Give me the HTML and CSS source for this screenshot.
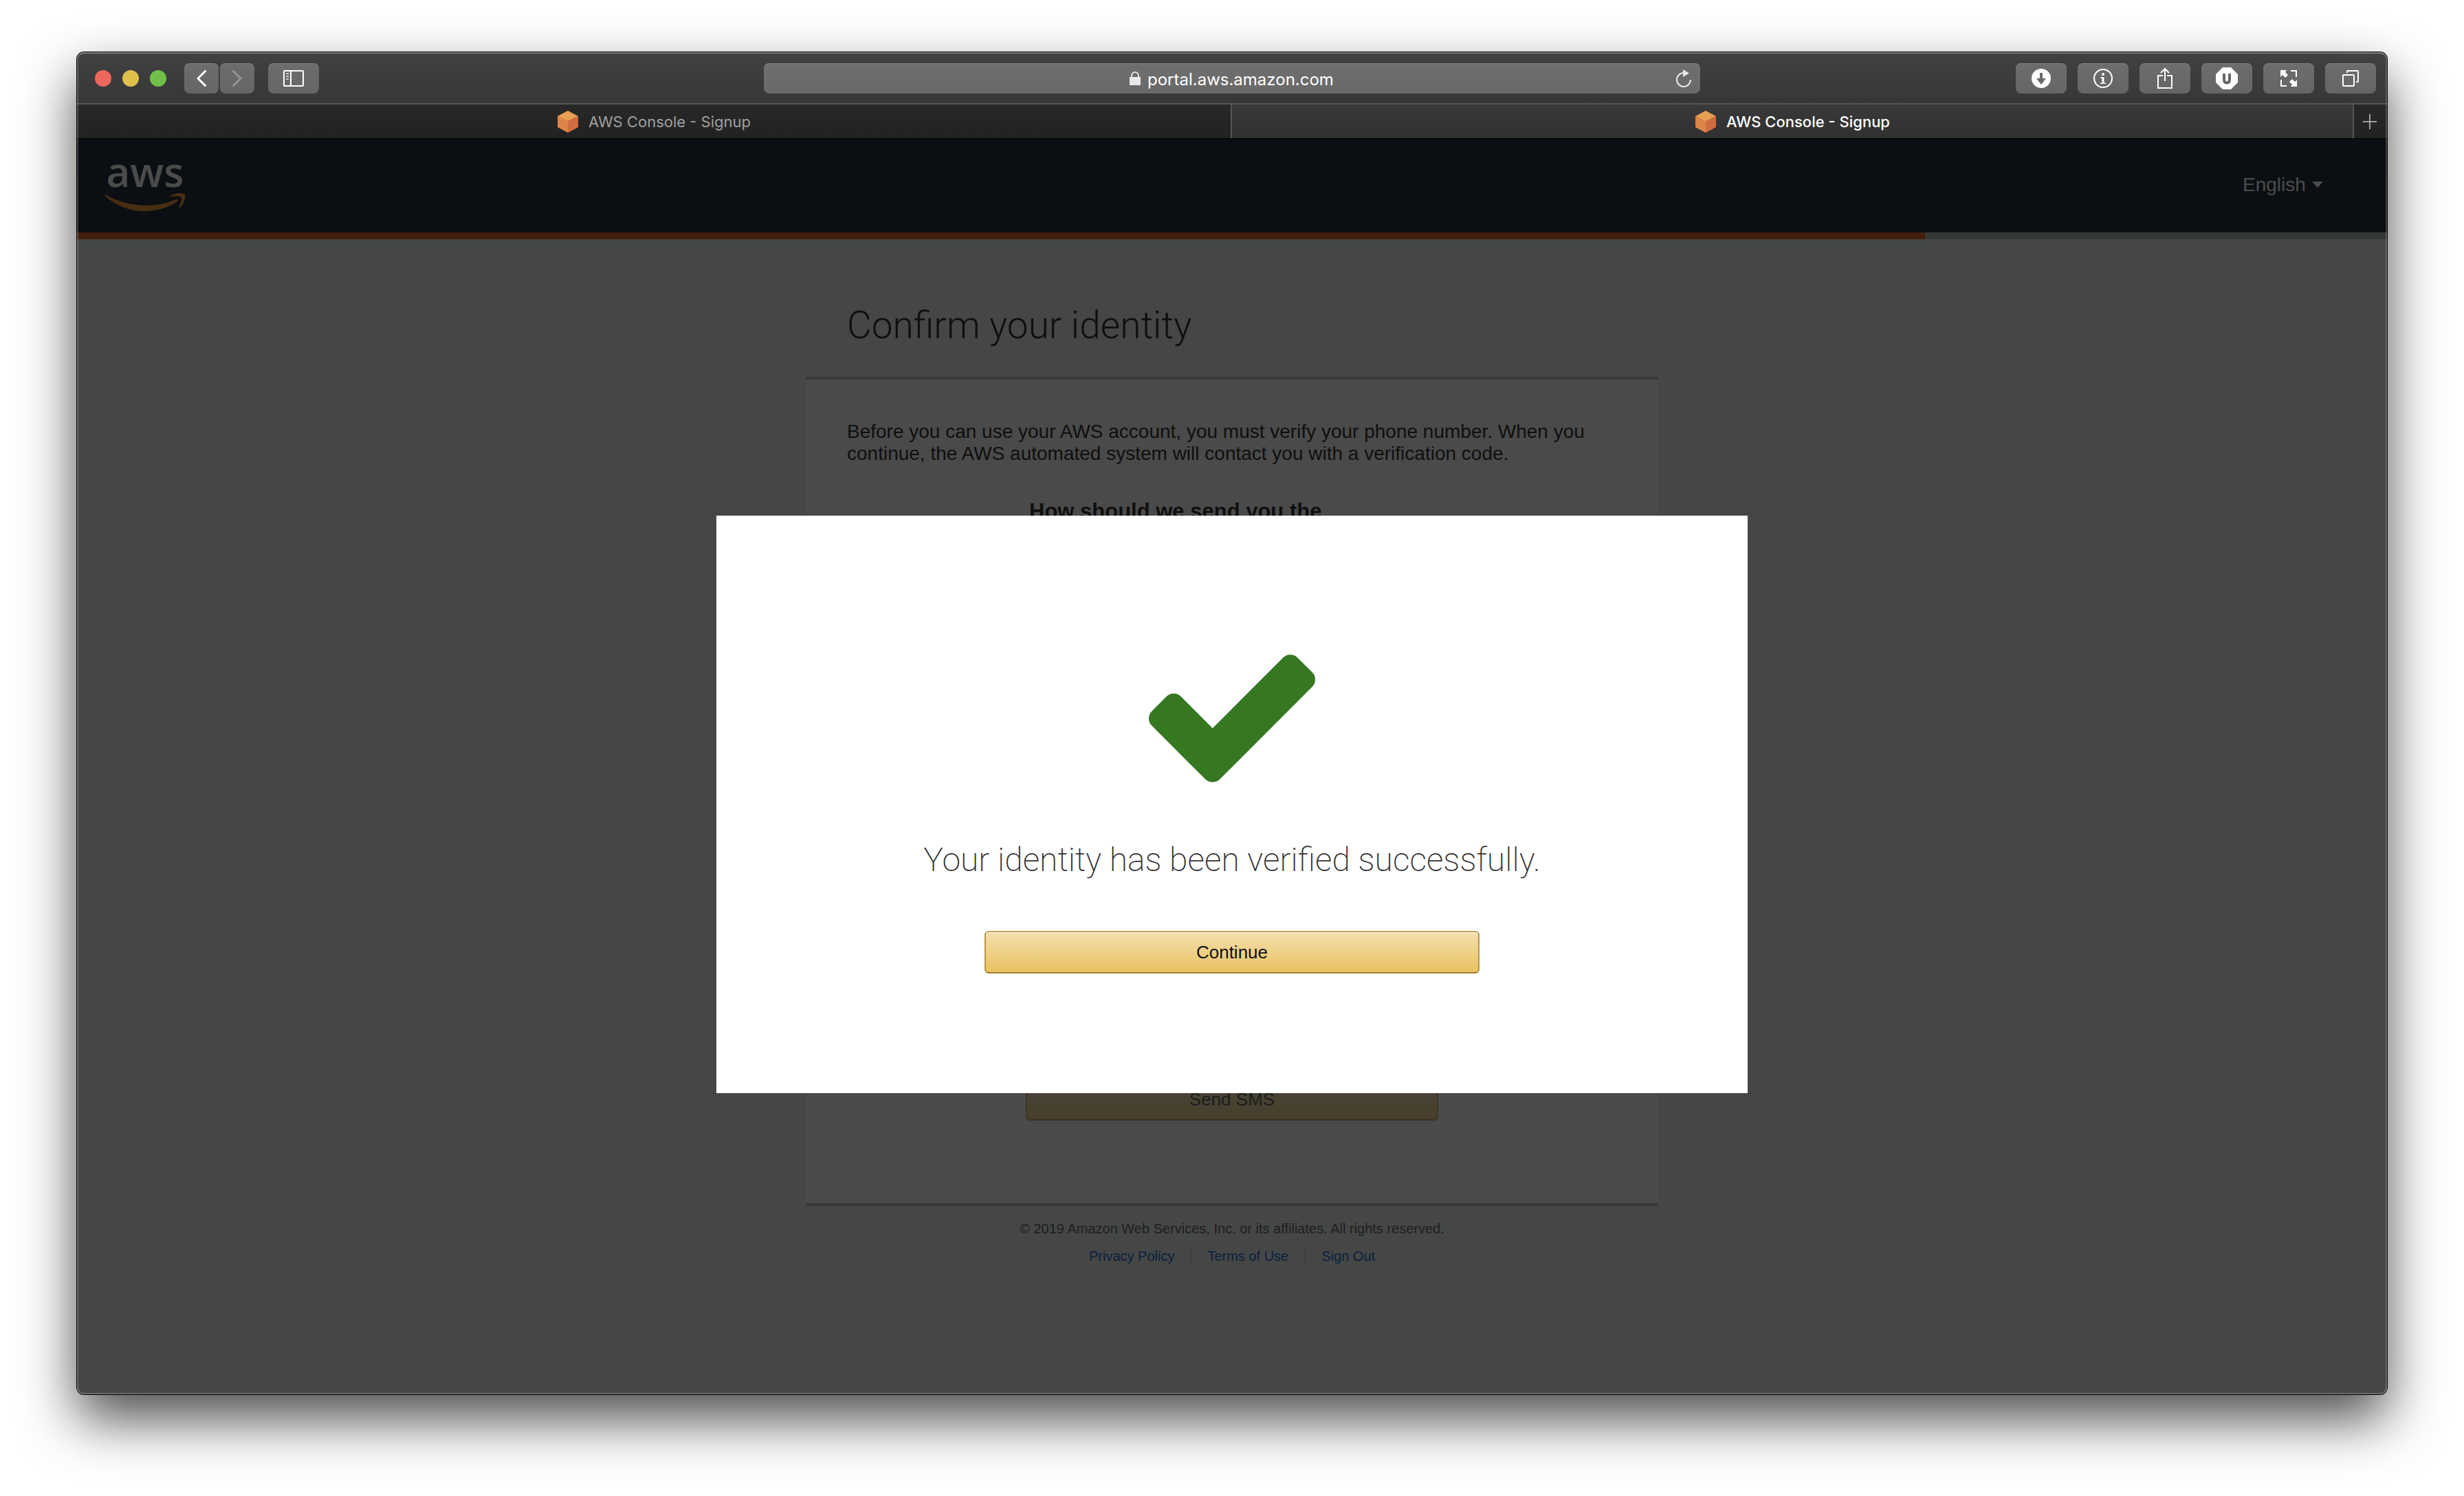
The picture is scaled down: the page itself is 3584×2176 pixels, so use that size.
FILE: index.html
```html
<!DOCTYPE html>
<html lang="en">
<head>
<meta charset="utf-8">
<title>AWS Console - Signup</title>
<link rel="stylesheet" href="styles.css">
</head>
<body>
<div class="window">
  <div class="toolbar">
    <div class="toolbar-side">
      <div class="lights">
        <span class="light light-close"></span>
        <span class="light light-min"></span>
        <span class="light light-max"></span>
      </div>
      <div class="nav">
        <button class="tool tool-nav" aria-label="Back"><svg width="14" height="24" viewBox="0 0 14 24"><path d="M12.500 1.500L2 12l10.500 10.500" fill="none" stroke="#fff" stroke-width="3" stroke-linecap="round" stroke-linejoin="round"/></svg></button>
        <button class="tool tool-nav" aria-label="Forward"><svg width="14" height="24" viewBox="0 0 14 24"><path d="M1.500 1.500L12 12 1.500 22.500" fill="none" stroke="#959595" stroke-width="3" stroke-linecap="round" stroke-linejoin="round"/></svg></button>
      </div>
      <button class="tool" aria-label="Sidebar"><svg width="30" height="24" viewBox="0 0 30 24"><rect x="1" y="1" width="28" height="22" rx="1" fill="none" stroke="#fff" stroke-width="2"/><path d="M11 1v22" stroke="#fff" stroke-width="2"/><path d="M4 5h4M4 9h4M4 13h4" stroke="#ccc" stroke-width="2"/></svg></button>
    </div>
    <div class="address">
      <svg class="lock" width="16" height="20" viewBox="0 0 16 20"><path d="M0 8h16v12H0z" fill="#e8e8e8"/><path d="M3 9V6a5 5 0 0 1 10 0v3" fill="none" stroke="#e8e8e8" stroke-width="2"/></svg>
      <input class="address-input" type="text" aria-label="Address" value="portal.aws.amazon.com">
      <button class="reload" aria-label="Reload"><svg width="22" height="26" viewBox="0 0 22 26"><path d="M11 5a10 10 0 1 0 10 10" fill="none" stroke="#e8e8e8" stroke-width="2"/><path d="M10 0l9 5.500-9 5.500z" fill="#e8e8e8"/></svg></button>
    </div>
    <div class="toolbar-side toolbar-right">
      <button class="tool" aria-label="Downloads"><svg width="28" height="28" viewBox="0 0 28 28"><circle cx="14" cy="14" r="14" fill="#fff"/><path d="M12 6h4v8h5l-7 9-7-9h5z" fill="#676767"/></svg></button>
      <button class="tool" aria-label="Info"><svg width="28" height="28" viewBox="0 0 28 28"><circle cx="14" cy="14" r="13" fill="none" stroke="#fff" stroke-width="2"/><circle cx="14" cy="8" r="2" fill="#fff"/><path d="M10.500 12h5v8.500H18V22h-8v-1.500h2.500V14h-2z" fill="#fff"/></svg></button>
      <button class="tool" aria-label="Share"><svg width="24" height="32" viewBox="0 0 24 32"><path d="M9 12H2v18h20V12h-7M12 20V3M6 8l6-6 6 6" fill="none" stroke="#fff" stroke-width="2"/></svg></button>
      <button class="tool" aria-label="Blocker"><svg width="32" height="32" viewBox="0 0 32 32"><path d="M10 0h12l10 10v12L22 32H10L0 22V10z" fill="#fff"/><path d="M12 9v8.500q0 5 4 5t4-5V9" fill="none" stroke="#676767" stroke-width="4"/></svg></button>
      <button class="tool" aria-label="Full screen"><svg width="24" height="24" viewBox="0 0 24 24"><path d="M15 1h8v9M1 14v9h8" fill="none" stroke="#fff" stroke-width="2"/><path d="M0 0h9L7 3l4 4-4 4-4-4-3 3zM24 24h-9l2-3-4-4 4-4 4 4 3-3z" fill="#fff"/></svg></button>
      <button class="tool" aria-label="All tabs"><svg width="24" height="24" viewBox="0 0 24 24"><rect x="1" y="7" width="16" height="16" rx="1" fill="none" stroke="#fff" stroke-width="2"/><path d="M7 4V2q0-1 1-1h14q1 0 1 1v14q0 1-1 1h-2" fill="none" stroke="#fff" stroke-width="2"/></svg></button>
    </div>
  </div>

  <div class="tabs">
    <button class="tab">
      <svg width="32" height="32" viewBox="0 0 32 32"><path d="M16 0l15 8-15 7.500L1 8z" fill="#e8a052"/><path d="M1 8l15 7v17L1 24z" fill="#dd8549"/><path d="M31 8l-15 7v17l15-8z" fill="#d06d40"/></svg>
      <span>AWS Console - Signup</span>
    </button>
    <button class="tab tab-active">
      <svg width="32" height="32" viewBox="0 0 32 32"><path d="M16 0l15 8-15 7.500L1 8z" fill="#e8a052"/><path d="M1 8l15 7v17L1 24z" fill="#dd8549"/><path d="M31 8l-15 7v17l15-8z" fill="#d06d40"/></svg>
      <span>AWS Console - Signup</span>
    </button>
    <button class="tab-new" aria-label="New tab"><svg width="20" height="22" viewBox="0 0 20 22"><path d="M10 0v22M0 11h20" stroke="#a0a0a0" stroke-width="2"/></svg></button>
  </div>

  <div class="page">
    <header class="header">
      <a class="logo" href="#">
        <span class="logo-word">aws</span>
        <svg width="118" height="27" viewBox="0 114 304 68"><path d="M273.500 143.700c-32.900 24.300-80.700 37.200-121.800 37.200-57.600 0-109.500-21.300-148.700-56.700-3.100-2.800-.3-6.600 3.400-4.400 42.400 24.600 94.700 39.500 148.800 39.500 36.500 0 76.600-7.600 113.500-23.200 5.500-2.500 10.200 3.600 4.800 7.600z" fill="#ee9c3a"/><path d="M287.200 128.100c-4.200-5.400-27.800-2.600-38.500-1.300-3.200.4-3.700-2.400-.8-4.500 18.800-13.200 49.700-9.400 53.300-5 3.600 4.500-1 35.400-18.600 50.200-2.700 2.300-5.300 1.100-4.100-1.900 4-9.900 12.900-32.200 8.700-37.500z" fill="#ee9c3a"/></svg>
      </a>
      <div class="language">
        <select class="language-select" aria-label="Language"><option>English</option></select>
        <svg width="16" height="9" viewBox="0 0 16 9"><path d="M0 0h16L8 9z" fill="#fafafa"/></svg>
      </div>
    </header>
    <div class="progress"><div class="progress-done" style="width: 80%"></div></div>

    <main class="main">
      <h1 class="title">Confirm your identity</h1>
      <section class="card">
        <p class="intro">Before you can use your AWS account, you must verify your phone number. When you continue, the AWS automated system will contact you with a verification code.</p>
        <h2 class="question">How should we send you the</h2>
        <button class="button button-send" disabled>Send SMS</button>
      </section>
    </main>

    <footer class="footer">
      <p class="copyright">© 2019 Amazon Web Services, Inc. or its affiliates. All rights reserved.</p>
      <nav class="links">
        <a href="#">Privacy Policy</a>
        <a href="#">Terms of Use</a>
        <a href="#">Sign Out</a>
      </nav>
    </footer>

    <div class="overlay">
      <div class="modal" role="dialog" aria-labelledby="modal-text">
        <svg width="242" height="186" viewBox="121 334 1550 1188"><path d="M1671 566q0 40-28 68l-724 724-136 136q-28 28-68 28t-68-28l-136-136-362-362q-28-28-28-68t28-68l136-136q28-28 68-28t68 28l294 295 656-657q28-28 68-28t68 28l136 136q28 28 28 68z" fill="#367822"/></svg>
        <p class="modal-text" id="modal-text">Your identity has been verified successfully.</p>
        <button class="button button-continue">Continue</button>
      </div>
    </div>
  </div>
</div>
</body>
</html>
```
FILE: styles.css
```css
* {
  box-sizing: border-box;
}

body {
  display: flex;
  min-height: 100vh;
  margin: 0;
  padding: 76px 112px 148px;
  background: #fff;
  font-family: "Liberation Sans", Arial, sans-serif;
}

h1, h2, p {
  margin: 0;
}

button, input, select {
  margin: 0;
  padding: 0;
  border: 0;
  background: none;
  color: inherit;
  font: inherit;
}

svg {
  display: block;
  flex: none;
}

/* Browser window */
.window {
  position: relative;
  display: flex;
  flex: 1;
  flex-direction: column;
  min-width: 0;
  overflow: hidden;
  border-radius: 10px;
  box-shadow: 0 0 0 1px #000, 0 36px 80px rgba(0, 0, 0, 0.7);
}

.window::after {
  content: "";
  position: absolute;
  inset: 0;
  border: 2px solid rgba(255, 255, 255, 0.2);
  border-top-color: rgba(255, 255, 255, 0.34);
  border-radius: 10px;
  pointer-events: none;
}

.toolbar {
  display: grid;
  grid-template-columns: 1fr minmax(0, 1362px) 1fr;
  align-items: center;
  height: 76px;
  padding: 2px 16px 0 26px;
  border-bottom: 2px solid #555;
  background: linear-gradient(#414141, #373737);
}

.toolbar-side {
  display: flex;
  align-items: center;
  gap: 20px;
}

.toolbar-right {
  justify-content: flex-end;
  gap: 16px;
}

.lights {
  display: flex;
  gap: 16px;
  margin-right: 6px;
}

.light {
  width: 24px;
  height: 24px;
  border-radius: 50%;
}

.light-close { background: #ee675c; }
.light-min { background: #e0c04c; }
.light-max { background: #71bf4a; }

.nav {
  display: flex;
  gap: 2px;
}

.tool {
  display: flex;
  align-items: center;
  justify-content: center;
  width: 74px;
  height: 44px;
  border-radius: 8px;
  background: linear-gradient(#6d6d6d, #656565);
  box-shadow: inset 0 1px #828282;
}

.tool-nav {
  width: 50px;
}

.address {
  position: relative;
  left: -5px;
  display: flex;
  align-items: center;
  justify-content: center;
  gap: 10px;
  height: 44px;
  border-radius: 8px;
  background: linear-gradient(#6f6f6f, #696969);
  box-shadow: inset 0 1px #858585;
}

.address-input {
  width: 272px;
  height: 32px;
  padding-top: 2px;
  color: #fff;
  font-family: Inter, sans-serif;
  font-size: 24px;
}

.reload {
  position: absolute;
  right: 13px;
}

.tabs {
  display: flex;
  height: 50px;
  border-bottom: 1px solid #000;
  background: linear-gradient(#282828, #222);
}

.tab {
  display: flex;
  flex: 1680;
  align-items: center;
  justify-content: center;
  gap: 14px;
  color: #a0a0a0;
  font-family: Inter, sans-serif;
  font-size: 22px;
}

.tab-active {
  flex: 1632;
  border: solid #565656;
  border-width: 0 2px;
  background: linear-gradient(#393939, #303030);
  color: #fff;
  font-weight: 500;
}

.tab-new {
  display: flex;
  align-items: center;
  justify-content: center;
  width: 48px;
  padding-right: 2px;
}

/* Sign-up page */
.page {
  position: relative;
  display: flex;
  flex: 1;
  flex-direction: column;
  background: #e6efe9;
}

.header {
  display: flex;
  align-items: flex-start;
  justify-content: space-between;
  height: 136px;
  padding: 0 93px 0 40px;
  background: #252f3e;
  color: #fafafa;
}

.logo {
  display: flex;
  flex-direction: column;
  align-items: center;
  gap: 10px;
  padding-top: 33px;
  color: inherit;
  text-decoration: none;
}

.logo-word {
  height: 36px;
  font-family: "Open Sans", sans-serif;
  font-size: 60px;
  font-weight: 600;
  line-height: 28px;
}

.language {
  display: flex;
  align-items: center;
  gap: 9px;
  padding-top: 50px;
}

.language-select {
  appearance: none;
  height: 32px;
  font-size: 28px;
}

.progress {
  height: 10px;
  background: #aabbbb;
}

.progress-done {
  height: 100%;
  background: #e36428;
}

.main {
  width: 100%;
  max-width: 1240px;
  margin: 0 auto;
}

.title {
  padding: 108px 60px 58px;
  color: #333;
  font-family: Roboto, sans-serif;
  font-size: 55px;
  font-weight: 300;
  line-height: 34px;
}

.card {
  display: flex;
  flex-direction: column;
  align-items: center;
  min-height: 1206px;
  padding: 60px 60px 120px;
  border: solid #bcbcbc;
  border-width: 4px 0;
  background: #f8f8f8;
}

.intro {
  color: #333;
  font-size: 28px;
  line-height: 32px;
}

.question {
  width: 100%;
  max-width: 590px;
  margin-top: 50px;
  color: #333;
  font-size: 31px;
  line-height: 36px;
}

.button {
  width: 100%;
  height: 62px;
  border: 2px solid;
  border-color: #c7a55a #b8964a #a08033;
  border-radius: 6px;
  background: linear-gradient(#f4dfae, #e9c260);
  box-shadow: inset 0 2px #f9edd0;
  color: #111;
  font-size: 26px;
}

.button-send {
  max-width: 600px;
  margin-top: auto;
  opacity: 0.68;
}

.button-continue {
  max-width: 720px;
}

.footer {
  display: flex;
  flex-direction: column;
  align-items: center;
  gap: 16px;
  padding-top: 21px;
  color: #666;
  font-size: 20px;
  line-height: 24px;
}

.links {
  display: flex;
}

.links a {
  padding: 0 23px;
  color: #1f68d0;
  text-decoration: none;
}

.links a + a {
  border-left: 2px solid #cfd6d2;
}

/* Confirmation */
.overlay {
  position: absolute;
  inset: 0;
  display: flex;
  align-items: flex-start;
  justify-content: center;
  padding-top: 548px;
  background: rgba(0, 0, 0, 0.7);
}

.modal {
  display: flex;
  flex-direction: column;
  align-items: center;
  width: 100%;
  max-width: 1500px;
  min-height: 840px;
  padding: 202px 60px 174px;
  background: #fff;
}

.modal-text {
  margin: 81px 0 71px;
  color: #333;
  font-family: Roboto, sans-serif;
  font-size: 48px;
  font-weight: 200;
  line-height: 64px;
}
```
